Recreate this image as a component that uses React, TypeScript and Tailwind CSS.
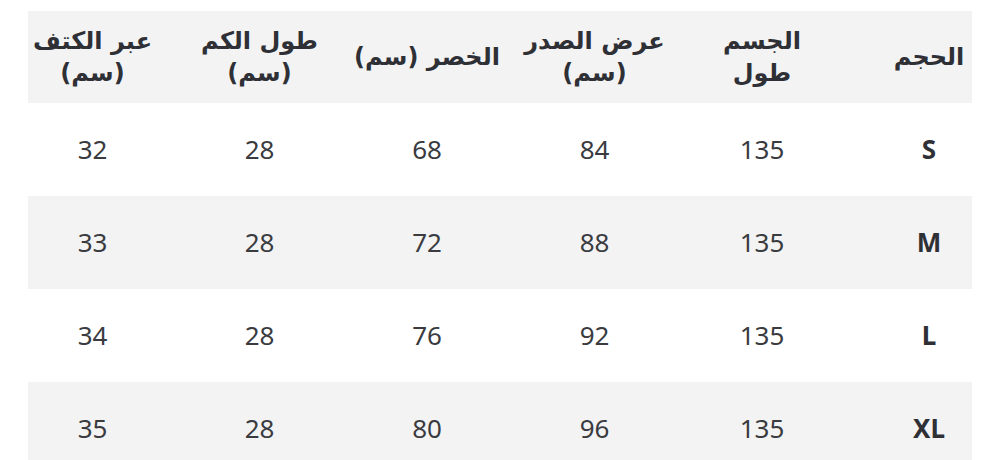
const headers: string[][] = [
  ["الحجم"],
  ["الجسم", "طول"],
  ["عرض الصدر", "(سم)"],
  ["الخصر (سم)"],
  ["طول الكم", "(سم)"],
  ["عبر الكتف", "(سم)"],
];

const rows = [
  { size: "S", values: ["135", "84", "68", "28", "32"] },
  { size: "M", values: ["135", "88", "72", "28", "33"] },
  { size: "L", values: ["135", "92", "76", "28", "34"] },
  { size: "XL", values: ["135", "96", "80", "28", "35"] },
];

// rtl order: first track is the right-most column
const gridClass =
  "grid grid-cols-[126px_168px_167px_168px_167px_147px] items-center";

const cellPad = ["pl-[40px]", "", "", "", "", "pr-[20px]"];

export default function App() {
  return (
    <div
      className="w-[1000px] h-[460px] overflow-hidden bg-white pt-[11px] px-[28px] text-[#34363b]"
      style={{ fontFamily: '"Noto Sans", "DejaVu Sans", sans-serif' }}
    >
      <div dir="rtl" className="w-[944px]">
        <div
          className={`${gridClass} h-[92px] bg-[#f3f3f4]`}
          style={{ fontFamily: '"DejaVu Sans", "Noto Sans", sans-serif' }}
        >
          {headers.map((lines, i) => (
            <div
              key={i}
              className={`text-center font-bold text-[24px] leading-[32px] text-[#2e3036] ${cellPad[i]}`}
            >
              {lines.map((l) => (
                <div key={l}>{l}</div>
              ))}
            </div>
          ))}
        </div>
        {rows.map((r, ri) => (
          <div
            key={r.size}
            className={`${gridClass} h-[93px] ${ri % 2 === 1 ? "bg-[#f3f3f4]" : "bg-white"}`}
          >
            <div className={`text-center font-bold text-[26px] text-[#2e3036] ${cellPad[0]}`}>
              {r.size}
            </div>
            {r.values.map((v, vi) => (
              <div
                key={vi}
                className={`text-center text-[26px] text-[#3a3b3f] ${cellPad[vi + 1]}`}
              >
                {v}
              </div>
            ))}
          </div>
        ))}
      </div>
    </div>
  );
}
